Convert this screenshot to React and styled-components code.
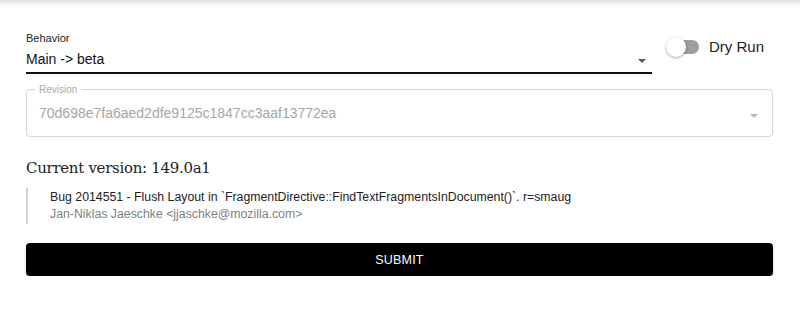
import React, { useState } from "react";
import styled, { createGlobalStyle } from "styled-components";

const GlobalStyle = createGlobalStyle`
  body {
    margin: 0;
    background: #fff;
    font-family: "Liberation Sans", Arial, sans-serif;
    color: #222;
  }
`;

const TopShadow = styled.div`
  height: 8px;
  background: linear-gradient(#dedede, #f6f6f6 50%, #fff);
`;

const Page = styled.div`
  padding: 23px 27px 0 26px;
`;

const TopRow = styled.div`
  display: flex;
  align-items: flex-start;
  gap: 15px;
`;

const SelectField = styled.div`
  flex: 1;
`;

const SmallLabel = styled.div`
  font-size: 11px;
  line-height: 14px;
  color: #222;
`;

const SelectValue = styled.div`
  display: flex;
  align-items: center;
  justify-content: space-between;
  height: 27px;
  font-size: 14px;
  color: #111;
  border-bottom: 2px solid #111;
  padding-right: 6px;
`;

const Caret = styled.span`
  width: 0;
  height: 0;
  border-left: 4px solid transparent;
  border-right: 4px solid transparent;
  border-top: 4px solid ${(p) => (p.$muted ? "#b5b5b5" : "#5a5a5a")};
  margin-top: 5px;
`;

const SwitchLabel = styled.label`
  display: flex;
  align-items: center;
  gap: 10px;
  margin: 7px 9px 0 0;
  font-size: 15px;
  color: #222;
  cursor: pointer;
`;

const Track = styled.span`
  position: relative;
  display: inline-block;
  width: 32px;
  height: 14px;
  border-radius: 7px;
  background: #9e9e9e;
`;

const Thumb = styled.span`
  position: absolute;
  top: -3px;
  left: ${(p) => (p.$on ? "12px" : "-1px")};
  width: 20px;
  height: 20px;
  border-radius: 50%;
  background: #fff;
  box-shadow: 0 1px 3px rgba(0, 0, 0, 0.35);
`;

const Outlined = styled.div`
  position: relative;
  margin-top: 15px;
  height: 48px;
  box-sizing: border-box;
  padding: 0 14px 0 12px;
  border: 1px solid #d6d6d6;
  border-radius: 4px;
  display: flex;
  align-items: center;
  justify-content: space-between;
`;

const FloatingLabel = styled.span`
  position: absolute;
  top: -6px;
  left: 8px;
  padding: 0 4px;
  background: #fff;
  font-size: 10px;
  line-height: 11px;
  color: #a8a8a8;
`;

const MutedValue = styled.div`
  font-size: 14px;
  color: #a6a6a6;
  margin-top: -1px;
`;

const Heading = styled.h2`
  margin: 21px 0 0;
  font-family: "DejaVu Serif", Georgia, serif;
  font-weight: 400;
  font-size: 15px;
  letter-spacing: -0.3px;
  line-height: 20px;
  color: #222;
`;

const Quote = styled.blockquote`
  margin: 10px 0 0;
  padding: 1px 0 1px 22px;
  border-left: 2px solid #cfcfcf;
  font-size: 12.3px;
  line-height: 17px;
`;

const CommitLine = styled.div`
  color: ${(p) => (p.$muted ? "#808080" : "#222")};
`;

const SubmitButton = styled.button`
  display: block;
  width: 100%;
  margin-top: 19px;
  height: 33px;
  border: none;
  border-radius: 4px;
  background: #000;
  color: #fff;
  font-family: "Liberation Sans", Arial, sans-serif;
  font-size: 12.5px;
  letter-spacing: 0.2px;
  box-shadow: 0 2px 3px rgba(0, 0, 0, 0.2);
  cursor: pointer;
`;

export default function App() {
  const [dryRun, setDryRun] = useState(false);

  return (
    <>
      <GlobalStyle />
      <TopShadow />
      <Page>
        <TopRow>
          <SelectField>
            <SmallLabel>Behavior</SmallLabel>
            <SelectValue>
              Main -&gt; beta
              <Caret />
            </SelectValue>
          </SelectField>
          <SwitchLabel onClick={() => setDryRun(!dryRun)}>
            <Track>
              <Thumb $on={dryRun} />
            </Track>
            Dry Run
          </SwitchLabel>
        </TopRow>
        <Outlined>
          <FloatingLabel>Revision</FloatingLabel>
          <MutedValue>70d698e7fa6aed2dfe9125c1847cc3aaf13772ea</MutedValue>
          <Caret $muted />
        </Outlined>
        <Heading>Current version: 149.0a1</Heading>
        <Quote>
          <CommitLine>
            Bug 2014551 - Flush Layout in
            `FragmentDirective::FindTextFragmentsInDocument()`. r=smaug
          </CommitLine>
          <CommitLine $muted>Jan-Niklas Jaeschke &lt;jjaschke@mozilla.com&gt;</CommitLine>
        </Quote>
        <SubmitButton type="submit">SUBMIT</SubmitButton>
      </Page>
    </>
  );
}
